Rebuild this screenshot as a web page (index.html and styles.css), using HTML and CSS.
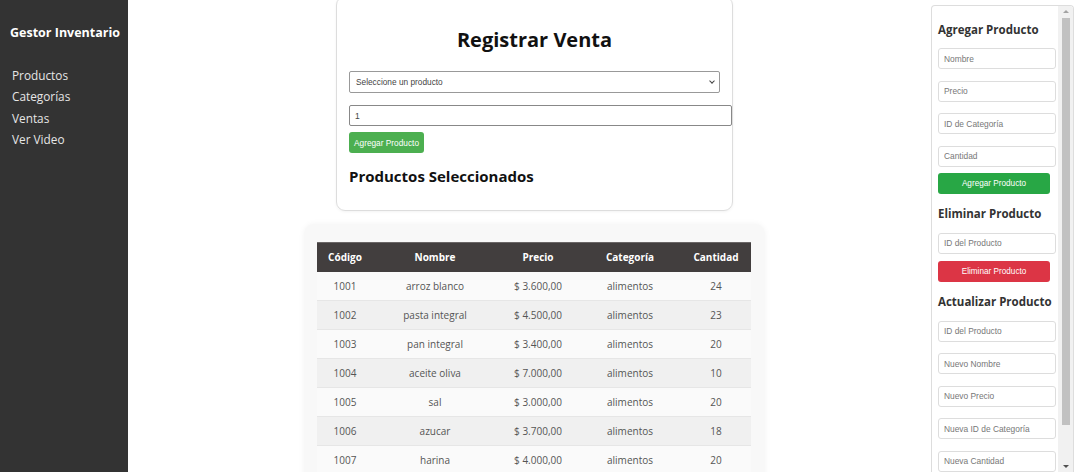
FILE: index.html
```html
<!DOCTYPE html>
<html lang="es">
<head>
<meta charset="utf-8">
<title>Gestor Inventario</title>
<link rel="stylesheet" href="styles.css">
</head>
<body>
<div class="layout">
  <nav class="sidebar">
    <div class="brand">Gestor Inventario</div>
    <ul class="menu">
      <li><a href="#">Productos</a></li>
      <li><a href="#">Categorías</a></li>
      <li><a href="#">Ventas</a></li>
      <li><a href="#">Ver Video</a></li>
    </ul>
  </nav>
  <main class="main">
    <section class="card">
      <h2 class="card-title">Registrar Venta</h2>
      <div class="sel-wrap"><select class="sel"><option>Seleccione un producto</option></select></div>
      <input class="qty" type="number" value="1">
      <button class="btn-add">Agregar Producto</button>
      <h3 class="sub">Productos Seleccionados</h3>
    </section>
    <section class="table-wrap">
      <table class="tbl">
        <colgroup>
          <col style="width:56px"><col style="width:124px"><col style="width:82px"><col style="width:102px"><col style="width:70px">
        </colgroup>
        <thead>
          <tr><th>Código</th><th>Nombre</th><th>Precio</th><th>Categoría</th><th>Cantidad</th></tr>
        </thead>
        <tbody>
          <tr><td>1001</td><td>arroz blanco</td><td>$ 3.600,00</td><td>alimentos</td><td>24</td></tr>
          <tr><td>1002</td><td>pasta integral</td><td>$ 4.500,00</td><td>alimentos</td><td>23</td></tr>
          <tr><td>1003</td><td>pan integral</td><td>$ 3.400,00</td><td>alimentos</td><td>20</td></tr>
          <tr><td>1004</td><td>aceite oliva</td><td>$ 7.000,00</td><td>alimentos</td><td>10</td></tr>
          <tr><td>1005</td><td>sal</td><td>$ 3.000,00</td><td>alimentos</td><td>20</td></tr>
          <tr><td>1006</td><td>azucar</td><td>$ 3.700,00</td><td>alimentos</td><td>18</td></tr>
          <tr><td>1007</td><td>harina</td><td>$ 4.000,00</td><td>alimentos</td><td>20</td></tr>
        </tbody>
      </table>
    </section>
  </main>
  <aside class="panel">
    <div class="panel-body">
      <h3 class="panel-h">Agregar Producto</h3>
      <div class="fields">
        <input class="fld" placeholder="Nombre">
        <input class="fld" placeholder="Precio">
        <input class="fld" placeholder="ID de Categoría">
        <input class="fld" placeholder="Cantidad">
      </div>
      <button class="pbtn green">Agregar Producto</button>
      <h3 class="panel-h">Eliminar Producto</h3>
      <div class="fields">
        <input class="fld" placeholder="ID del Producto">
      </div>
      <button class="pbtn red">Eliminar Producto</button>
      <h3 class="panel-h">Actualizar Producto</h3>
      <div class="fields">
        <input class="fld" placeholder="ID del Producto">
        <input class="fld" placeholder="Nuevo Nombre">
        <input class="fld" placeholder="Nuevo Precio">
        <input class="fld" placeholder="Nueva ID de Categoría">
        <input class="fld" placeholder="Nueva Cantidad">
      </div>
    </div>
    <div class="scrollbar" aria-hidden="true">
      <span class="arrow up"></span>
      <span class="thumb"></span>
      <span class="arrow down"></span>
    </div>
  </aside>
</div>
</body>
</html>
```

FILE: styles.css
```css
* { box-sizing: border-box; }
html, body { margin: 0; height: 100%; overflow: hidden; }
body { background: #fff; font-family: "Open Sans", sans-serif; color: #222; }

.layout { display: flex; height: 100vh; }

.sidebar { width: 128px; flex: none; background: #333; color: #fff; padding: 24px 0 0 10px; }
.brand { font-weight: 700; font-size: 12.5px; line-height: 18px; white-space: nowrap; margin-bottom: 22px; }
.menu { list-style: none; margin: 0; padding: 0 0 0 2px; }
.menu li { line-height: 21.3px; height: 21.3px; }
.menu a { color: #e6e6e6; text-decoration: none; font-size: 11.8px; }

.main { flex: 1; display: flex; flex-direction: column; align-items: center; padding-left: 15px; }

.card { width: 397px; margin-top: -4px; border: 1px solid #ddd; border-radius: 9px; padding: 28px 12px 23px; box-shadow: 0 1px 3px rgba(0,0,0,0.05); }
.card-title { margin: 0 0 16px; text-align: center; font-size: 20px; line-height: 30px; font-weight: 700; color: #111; }
.sel-wrap { position: relative; }
.sel-wrap::after { content: ""; position: absolute; right: 6px; top: 8px; width: 3px; height: 3px; border-right: 1.3px solid #444; border-bottom: 1.3px solid #444; transform: rotate(45deg); pointer-events: none; }
.sel { display: block; width: 100%; height: 22px; font: 8.3px "Liberation Sans", Arial, sans-serif; color: #444; border: 1px solid #999; border-radius: 2px; background: #fff; padding: 0 6px; margin: 0; appearance: none; -webkit-appearance: none; }
.qty { display: block; box-sizing: content-box; width: 100%; height: 19px; padding: 0 5px; margin: 12px 0 0; font: 8.5px "Liberation Sans", Arial, sans-serif; color: #444; border: 1px solid #888; border-radius: 2px; }
.btn-add { display: block; margin-top: 6px; height: 21px; width: 75px; padding: 0; background: #4caf50; color: #fff; border: none; border-radius: 3px; font: 8.3px "Liberation Sans", Arial, sans-serif; }
.sub { margin: 12px 0 0; font-size: 15px; line-height: 22px; font-weight: 700; color: #111; }

.table-wrap { margin-top: 13px; width: 461px; background: #f8f8f8; border-radius: 10px; padding: 18px 13px 20px; box-shadow: 0 0 6px rgba(0,0,0,0.05); }
.tbl { width: 434px; border-collapse: collapse; table-layout: fixed; font-size: 10px; }
.tbl th { background: #423e3e; color: #fff; font-weight: 700; height: 29px; padding: 0; text-align: center; border-top: 1px solid #6a6666; }
.tbl td { height: 29px; padding: 0; text-align: center; color: #555; font-weight: 400; border-bottom: 1px solid #e6e6e6; }
.tbl tbody tr:nth-child(odd) td { background: #fafafa; }
.tbl tbody tr:nth-child(even) td { background: #f0f0f0; }

.panel { width: 143px; flex: none; margin: 5px 0 0 5px; height: calc(100vh - 5px); border: 1px solid #ddd; border-bottom: none; border-radius: 4px 4px 0 0; display: flex; overflow: hidden; background: #fff; }
.panel-body { flex: 1; padding: 3px 2px 0 6px; overflow: hidden; }
.panel-h { margin: 11px 0 10px; font-size: 11.5px; line-height: 18px; font-weight: 700; color: #333; white-space: nowrap; }
.panel-h:first-child { margin-top: 12px; margin-bottom: 9px; }
.fields { display: flex; flex-direction: column; gap: 11.5px; }
.fld { width: 118px; height: 21px; flex: none; border: 1px solid #ddd; border-radius: 3px; padding: 0 5px; font: 8.4px "Liberation Sans", Arial, sans-serif; color: #333; }
.fld::placeholder { color: #777; }
.pbtn { display: block; width: 112px; height: 21px; margin-top: 6px; border: none; border-radius: 3px; color: #fff; font: 8.2px "Liberation Sans", Arial, sans-serif; padding: 0; }
.green { background: #28a745; }
.red { background: #dc3545; margin-top: 7px; }

.scrollbar { width: 15px; flex: none; background: #f1f1f1; display: flex; flex-direction: column; align-items: center; }
.arrow { width: 0; height: 0; border-left: 3px solid transparent; border-right: 3px solid transparent; flex: none; }
.arrow.up { border-bottom: 3px solid #a3a3a3; margin: 4px 0 4px; }
.arrow.down { border-top: 3px solid #505050; margin: 0 0 4px; }
.thumb { width: 8px; flex: 1; margin: 1px 0 40px; background: #c1c1c1; }
```
